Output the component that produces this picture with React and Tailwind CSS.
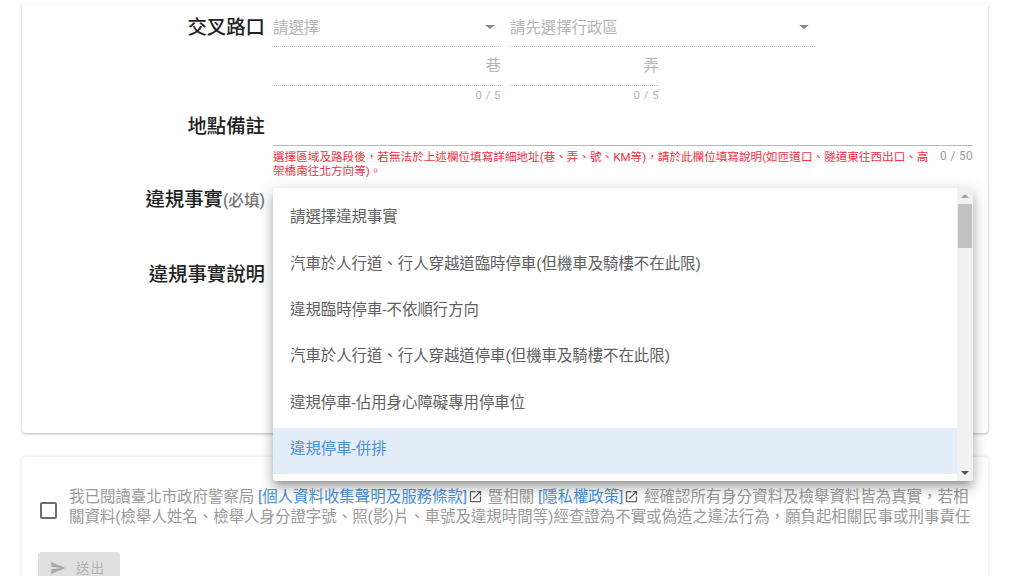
import React from "react";

const options = [
  "請選擇違規事實",
  "汽車於人行道、行人穿越道臨時停車(但機車及騎樓不在此限)",
  "違規臨時停車-不依順行方向",
  "汽車於人行道、行人穿越道停車(但機車及騎樓不在此限)",
  "違規停車-佔用身心障礙專用停車位",
  "違規停車-併排",
];

const Label = ({ children, className = "" }) => (
  <div className={`w-[243px] shrink-0 text-right text-[19.4px] leading-6 font-medium text-[#222] ${className}`}>
    {children}
  </div>
);

const Caret = () => (
  <span className="w-0 h-0 border-x-[5px] border-x-transparent border-t-[4px] border-t-[#8a8a8a]" />
);

const SelectBox = ({ text, width }) => (
  <div className={`${width} h-[43px] border-b border-dotted border-[#bdbdbd] flex items-start justify-between pt-[14px] pr-[6px]`}>
    <span className="text-[15.4px] leading-5 text-[#b5b5b5]">{text}</span>
    <span className="mt-[7px] flex"><Caret /></span>
  </div>
);

const ShortInput = ({ text, width }) => (
  <div className={width}>
    <div className="h-[39px] border-b border-dotted border-[#bdbdbd] text-right text-[15.4px] leading-5 text-[#b5b5b5] pt-[9px]">
      {text}
    </div>
    <div className="text-right text-[11.5px] leading-4 tracking-[0.4px] text-[#b5b5b5] pt-[1px]">0 / 5</div>
  </div>
);

const Dropdown = () => (
  <div className="absolute left-[273px] top-[188px] w-[700px] h-[293px] bg-white rounded-[3px] flex overflow-hidden shadow-[0_5px_6px_-3px_rgba(0,0,0,0.25),0_8px_12px_1px_rgba(0,0,0,0.16),0_3px_16px_2px_rgba(0,0,0,0.12)]">
    <ul className="flex-1 pt-[8px]">
      {options.map((o, i) => (
        <li
          key={o}
          className={`h-[46.4px] pl-[17px] pb-[3px] flex items-center text-[15.4px] ${
            i === 5 ? "bg-[#e3edf7] text-[#4a90d9]" : "text-[#5f5f5f]"
          }`}
        >
          {o}
        </li>
      ))}
    </ul>
    <div className="relative w-[16px] bg-[#f1f1f1] flex flex-col items-center justify-between py-[6px]">
      <span className="w-0 h-0 border-x-[4px] border-x-transparent border-b-[4px] border-b-[#a3a3a3]" />
      <div className="absolute left-[1px] top-[16px] w-[14px] h-[44px] bg-[#c1c1c1]" />
      <span className="w-0 h-0 border-x-[4px] border-x-transparent border-t-[4px] border-t-[#505050]" />
    </div>
  </div>
);

const OpenInNew = () => (
  <svg viewBox="0 0 24 24" className="inline w-[15px] h-[15px] mx-[1px] align-[-2px] fill-[#616161]">
    <path d="M19 19H5V5h7V3H5a2 2 0 0 0-2 2v14a2 2 0 0 0 2 2h14c1.1 0 2-.9 2-2v-7h-2v7zM14 3v2h3.59l-9.83 9.83 1.41 1.41L19 6.41V10h2V3h-7z" />
  </svg>
);

const TermsLink = ({ children }) => (
  <>
    <span className="text-[#4a90d9]">{children}</span>
    <OpenInNew />
  </>
);

export default function App() {
  return (
    <div
      lang="zh-TW"
      className="relative w-[1024px] h-[576px] overflow-hidden bg-white pt-[4px] font-[Roboto,'Noto_Sans_CJK_TC','Noto_Sans_CJK_SC',sans-serif]"
    >
      <div className="ml-[22px] w-[966px] h-[429px] bg-white rounded-b-[4px] shadow-[0_1px_3px_rgba(0,0,0,0.28)]">
        <div className="flex items-start gap-[8px]">
          <Label className="mt-[12px]">交叉路口</Label>
          <div className="flex gap-[9px]">
            <SelectBox text="請選擇" width="w-[228px]" />
            <SelectBox text="請先選擇行政區" width="w-[305px]" />
          </div>
        </div>
        <div className="flex gap-[9px] pl-[251px]">
          <ShortInput text="巷" width="w-[228px]" />
          <ShortInput text="弄" width="w-[149px]" />
        </div>
        <div className="flex items-start gap-[8px] mt-[4px]">
          <Label className="mt-[8px]">地點備註</Label>
          <div className="flex-1 mr-[15px]">
            <div className="h-[39px] border-b border-[#b8b8b8]" />
            <div className="flex items-start justify-between pt-[3px]">
              <p className="w-[660px] pt-[1px] text-[11.6px] leading-[14px] text-[#f0313f]">
                選擇區域及路段後，若無法於上述欄位填寫詳細地址(巷、弄、號、KM等)，請於此欄位填寫說明(如匝道口、隧道東往西出口、高架橋南往北方向等)。
              </p>
              <span className="-mt-[1px] text-[12px] leading-[16px] tracking-[0.3px] text-[#9e9e9e]">0 / 50</span>
            </div>
          </div>
        </div>
        <div className="flex items-baseline justify-end w-[243px] mt-[10px]">
          <span className="text-[19.4px] leading-6 font-medium text-[#222]">違規事實</span>
          <span className="text-[15.6px] leading-6 font-medium text-[#757575]">(必填)</span>
        </div>
        <Label className="mt-[50px]">違規事實說明</Label>
      </div>

      <div className="mt-[24px] ml-[22px] w-[966px] h-[130px] bg-white rounded-t-[4px] shadow-[0_0_4px_rgba(0,0,0,0.14)] pt-[30px] pl-[18px]">
        <div className="flex items-start gap-[12px]">
          <span className="mt-[15px] w-[17px] h-[17px] shrink-0 rounded-[2px] border-2 border-[#6f6f6f]" />
          <p className="w-[906px] text-[15.45px] leading-[20px] text-[#9a9a9a]">
            我已閱讀臺北市政府警察局 <TermsLink>[個人資料收集聲明及服務條款]</TermsLink> 暨相關 <TermsLink>[隱私權政策]</TermsLink> 經確認所有身分資料及檢舉資料皆為真實，若相關資料(檢舉人姓名、檢舉人身分證字號、照(影)片、車號及違規時間等)經查證為不實或偽造之違法行為，願負起相關民事或刑事責任
          </p>
        </div>
        <div className="mt-[25px] -ml-[2px] w-[82px] h-[36px] bg-[#e0e0e0] rounded-[4px] flex items-start pt-[7px] pl-[12px] gap-[10px] text-[#b0b0b0]">
          <svg viewBox="0 0 24 24" className="w-[16px] h-[16px] mt-[1px] fill-[#a8a8a8]">
            <path d="M2.01 21L23 12 2.01 3 2 10l15 2-15 2z" />
          </svg>
          <span className="text-[13.5px] leading-[18px] tracking-[1px]">送出</span>
        </div>
      </div>

      <Dropdown />
    </div>
  );
}
